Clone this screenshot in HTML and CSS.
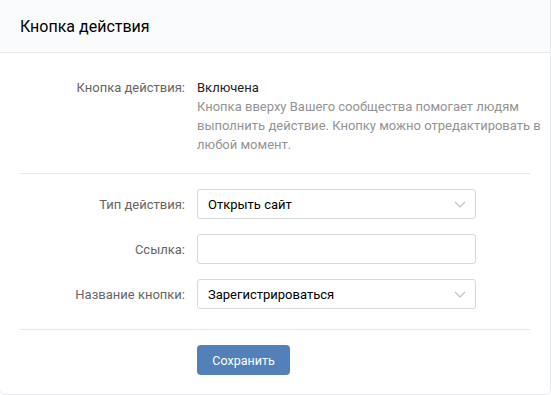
FILE: index.html
```html
<!DOCTYPE html>
<html lang="ru">
<head>
<meta charset="utf-8">
<title>Кнопка действия</title>
<link rel="stylesheet" href="styles.css">
</head>
<body>
<div class="card">
  <div class="card-header">Кнопка действия</div>
  <div class="section section-info">
    <div class="row row-top">
      <div class="label">Кнопка действия:</div>
      <div class="value">
        <div class="value-main">Включена</div>
        <div class="desc">Кнопка вверху Вашего сообщества помогает людям выполнить действие. Кнопку можно отредактировать в любой момент.</div>
      </div>
    </div>
  </div>
  <div class="section section-form">
    <div class="row">
      <div class="label">Тип действия:</div>
      <div class="field select">
        <span class="field-text">Открыть сайт</span>
        <svg class="chevron" width="12" height="7" viewBox="0 0 12 7"><path d="M1 1l5 5 5-5" fill="none" stroke="#b8c1cc" stroke-width="1.2"/></svg>
      </div>
    </div>
    <div class="row">
      <div class="label">Ссылка:</div>
      <div class="field"></div>
    </div>
    <div class="row">
      <div class="label">Название кнопки:</div>
      <div class="field select">
        <span class="field-text">Зарегистрироваться</span>
        <svg class="chevron" width="12" height="7" viewBox="0 0 12 7"><path d="M1 1l5 5 5-5" fill="none" stroke="#b8c1cc" stroke-width="1.2"/></svg>
      </div>
    </div>
  </div>
  <div class="section section-actions">
    <div class="row">
      <div class="label"></div>
      <div><button class="btn">Сохранить</button></div>
    </div>
  </div>
</div>
</body>
</html>
```
FILE: styles.css
```css
html, body {
  margin: 0;
  padding: 0;
  background: #ffffff;
}
body {
  font-family: Roboto, "Open Sans", "Liberation Sans", sans-serif;
  font-size: 13px;
  color: #000;
  overflow: hidden;
}
.card {
  box-sizing: border-box;
  width: 552px;
  height: 396px;
  margin: -1px 0 0 -1px;
  border: 1px solid #e7e8ec;
  border-radius: 0 0 6px 6px;
  background: #fff;
}
.card-header {
  height: 53px;
  box-sizing: border-box;
  padding: 1px 0 0 20px;
  display: flex;
  align-items: center;
  background: #fafbfc;
  border-bottom: 1px solid #e7e8ec;
  font-size: 16px;
  color: #000;
}
.section {
  margin: 0 20px;
}
.section-info {
  padding: 25px 0 19px;
  border-bottom: 1px solid #e7e8ec;
}
.section-form {
  padding: 15px 0 20px;
  border-bottom: 1px solid #e7e8ec;
  display: flex;
  flex-direction: column;
  gap: 15px;
}
.section-actions {
  padding: 15px 0 0;
}
.row {
  display: grid;
  grid-template-columns: 165px 279px;
  column-gap: 12px;
  align-items: center;
}
.row-top {
  align-items: start;
}
.label {
  text-align: right;
  color: #656565;
  line-height: 19px;
}
.value {
  line-height: 19px;
}
.value-main {
  color: #222;
}
.desc {
  color: #939393;
  width: 345px;
}
.field {
  box-sizing: border-box;
  height: 30px;
  border: 1px solid #d3d9de;
  border-radius: 3px;
  background: #fff;
  display: flex;
  align-items: center;
  justify-content: space-between;
  padding: 0 9px 0 10px;
}
.field-text {
  color: #000;
}
.chevron {
  display: block;
  margin-top: 1px;
}
.btn {
  box-sizing: border-box;
  height: 30px;
  width: 93px;
  border: 0;
  border-radius: 4px;
  background: #5181b8;
  color: #fff;
  font-family: Roboto, "Open Sans", "Liberation Sans", sans-serif;
  font-size: 12.5px;
  padding: 0;
  display: block;
}
```
